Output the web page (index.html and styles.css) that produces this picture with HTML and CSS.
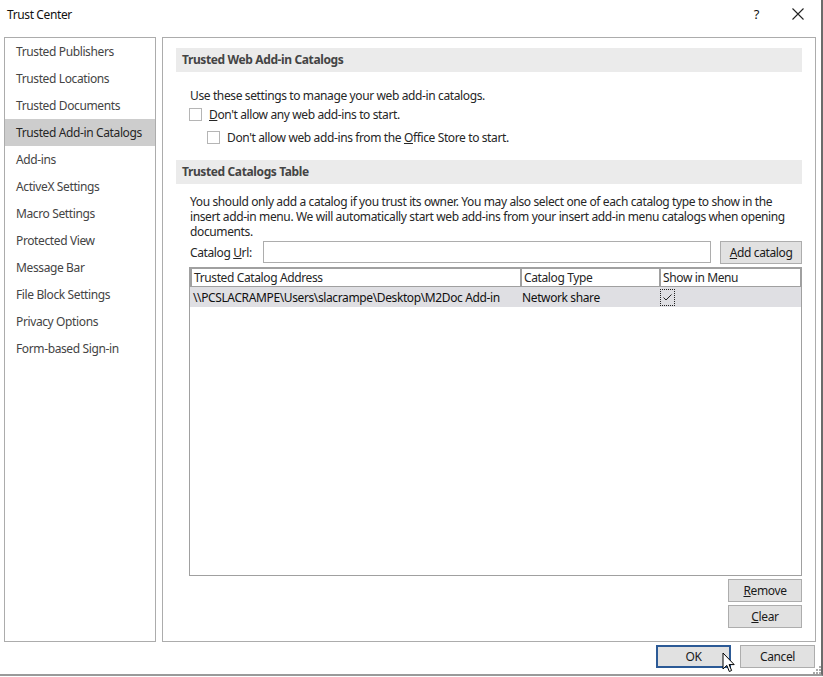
FILE: index.html
```html
<!DOCTYPE html>
<html>
<head>
<meta charset="utf-8">
<link rel="stylesheet" href="styles.css">
</head>
<body>
<div class="window">
  <div class="titlebar">
    <span class="title">Trust Center</span>
    <span class="tb-btns"><span class="help">?</span><svg class="close" width="12" height="12" viewBox="0 0 12 12"><path d="M0.5 0.5L11.5 11.5M11.5 0.5L0.5 11.5" stroke="#222" stroke-width="1.1" fill="none"/></svg></span>
  </div>
  <div class="main">
    <ul class="nav">
      <li>Trusted Publishers</li>
      <li>Trusted Locations</li>
      <li>Trusted Documents</li>
      <li class="sel">Trusted Add-in Catalogs</li>
      <li>Add-ins</li>
      <li>ActiveX Settings</li>
      <li>Macro Settings</li>
      <li>Protected View</li>
      <li>Message Bar</li>
      <li>File Block Settings</li>
      <li>Privacy Options</li>
      <li>Form-based Sign-in</li>
    </ul>
    <div class="panel">
      <div class="band">Trusted Web Add-in Catalogs</div>
      <div class="sec1">
        <div class="line">Use these settings to manage your web add-in catalogs.</div>
        <label class="chk"><span class="box"></span><span><u>D</u>on't allow any web add-ins to start.</span></label>
        <label class="chk sub"><span class="box"></span><span>Don't allow web add-ins from the <u>O</u>ffice Store to start.</span></label>
      </div>
      <div class="band">Trusted Catalogs Table</div>
      <div class="sec2">
        <p class="para">You should only add a catalog if you trust its owner. You may also select one of each catalog type to show in the insert add-in menu. We will automatically start web add-ins from your insert add-in menu catalogs when opening documents.</p>
        <div class="urlrow">
          <span class="urllabel">Catalog <u>U</u>rl:</span>
          <span class="input"></span>
          <span class="btn addbtn"><u>A</u>dd catalog</span>
        </div>
        <div class="table">
          <div class="thead">
            <span class="th c1">Trusted Catalog Address</span>
            <span class="th c2">Catalog Type</span>
            <span class="th c3">Show in Menu</span>
          </div>
          <div class="trow">
            <span class="td c1">\\PCSLACRAMPE\Users\slacrampe\Desktop\M2Doc Add-in</span>
            <span class="td c2">Network share</span>
            <span class="td c3"><span class="rowchk"><svg width="11" height="9" viewBox="0 0 11 9"><path d="M1.5 4.5L4 7L9.5 1.5" stroke="#222" stroke-width="1" fill="none"/></svg></span></span>
          </div>
        </div>
        <div class="sidebtns">
          <span class="btn"><u>R</u>emove</span>
          <span class="btn"><u>C</u>lear</span>
        </div>
      </div>
    </div>
  </div>
  <div class="footer">
    <span class="btn fbtn ok">OK</span>
    <span class="btn fbtn">Cancel</span>
  </div>
  <svg class="cursor" width="14" height="22" viewBox="0 0 14 22"><path d="M1 1L1 17L4.8 13.4L7.3 19.5L9.6 18.5L7.1 12.6L12.2 12.6Z" fill="#fff" stroke="#000" stroke-width="1"/></svg>
  <svg class="grip" width="8" height="8" viewBox="0 0 8 8"><g fill="#aaa"><rect x="6" y="0" width="2" height="2"/><rect x="3" y="3" width="2" height="2"/><rect x="6" y="3" width="2" height="2"/><rect x="0" y="6" width="2" height="2"/><rect x="3" y="6" width="2" height="2"/><rect x="6" y="6" width="2" height="2"/></g></svg>
</div>
</body>
</html>
```
FILE: styles.css
```css
html, body {
  margin: 0;
  padding: 0;
  background: #fff;
}
body {
  font-family: "Noto Sans", "Open Sans", sans-serif;
  font-size: 12px;
  letter-spacing: -0.38px;
  color: #262626;
  width: 823px;
  height: 677px;
  overflow: hidden;
}
.window {
  position: relative;
  width: 821px;
  height: 674px;
  border-right: 2px solid #6b6b6b;
  border-bottom: 2px solid #9a9a9a;
  display: flex;
  flex-direction: column;
}
.titlebar {
  height: 28px;
  display: flex;
  align-items: center;
  justify-content: space-between;
  padding: 0 17px 0 7px;
  color: #111;
}
.tb-btns {
  display: flex;
  align-items: center;
  gap: 33px;
}
.help { font-size: 13px; }
.main {
  display: flex;
  gap: 6px;
  margin-top: 9px;
  padding-left: 4px;
  height: 605px;
}
.nav {
  list-style: none;
  margin: 0;
  padding: 0;
  width: 150px;
  border: 1px solid #acacac;
}
.nav li {
  height: 27px;
  line-height: 27px;
  padding-left: 11px;
  color: #444;
  white-space: nowrap;
}
.nav li.sel {
  background: #cdcdcd;
  color: #262626;
}
.panel {
  border: 1px solid #acacac;
  padding: 10px 13px 0 13px;
  box-sizing: border-box;
  width: 654px;
}
.band {
  background: #ebebeb;
  height: 24px;
  line-height: 24px;
  padding-left: 6px;
  font-weight: bold;
  color: #444;
}
.sec1 {
  padding: 16px 0 13px 13px;
}
.line {
  height: 16px;
  line-height: 16px;
  margin-left: 1px;
}
.chk {
  display: flex;
  align-items: center;
  gap: 7px;
  height: 20px;
}
.chk.sub {
  margin-left: 18px;
  margin-top: 3px;
}
.box {
  width: 11px;
  height: 11px;
  border: 1px solid #b5b5b5;
  background: #fff;
}
.sec2 {
  padding: 10px 0 0 13px;
}
.para {
  margin: 0 0 0 1px;
  line-height: 15px;
  padding-right: 10px;
}
.urlrow {
  display: flex;
  align-items: center;
  margin-top: 1px;
  height: 24px;
}
.urllabel {
  width: 73px;
  padding-left: 1px;
}
.input {
  width: 447px;
  height: 20px;
  border: 1px solid #adadad;
}
.btn {
  display: inline-flex;
  align-items: center;
  justify-content: center;
  background: #e1e1e1;
  border: 1px solid #adadad;
  color: #1a1a1a;
  box-sizing: border-box;
}
.addbtn {
  margin-left: 9px;
  width: 82px;
  height: 23px;
}
.table {
  margin-top: 3px;
  width: 613px;
  height: 309px;
  border: 1px solid #a0a0a0;
  box-sizing: border-box;
}
.thead {
  display: flex;
  gap: 2px;
  background: #a0a0a0;
  padding: 1px 1px 1px 2px;
}
.th {
  background: #fff;
  height: 17px;
  line-height: 17px;
  padding-left: 2px;
  white-space: nowrap;
}
.c1 { width: 326px; flex: none; }
.c2 { width: 135px; flex: none; }
.c3 { width: 137px; flex: none; }
.trow {
  display: flex;
  gap: 2px;
  background: #dfdfe3;
  height: 20px;
  align-items: center;
  padding-left: 2px;
}
.td {
  padding-left: 1px;
  white-space: nowrap;
  overflow: hidden;
  color: #111;
}
.rowchk {
  display: flex;
  width: 13px;
  height: 15px;
  border: 1px dotted #222;
  align-items: center;
  justify-content: center;
  margin-left: 0;
}
.sidebtns {
  display: flex;
  flex-direction: column;
  gap: 3px;
  align-items: flex-end;
  margin-top: 3px;
  width: 613px;
}
.sidebtns .btn {
  width: 74px;
  height: 23px;
}
.footer {
  display: flex;
  justify-content: flex-end;
  gap: 9px;
  padding: 3px 6px 0 0;
}
.fbtn {
  width: 75px;
  height: 23px;
}
.ok {
  border: 2px solid #2c5a96;
}
.cursor {
  position: absolute;
  left: 722px;
  top: 652px;
}
.grip {
  position: absolute;
  right: 0;
  bottom: 0;
}
```
